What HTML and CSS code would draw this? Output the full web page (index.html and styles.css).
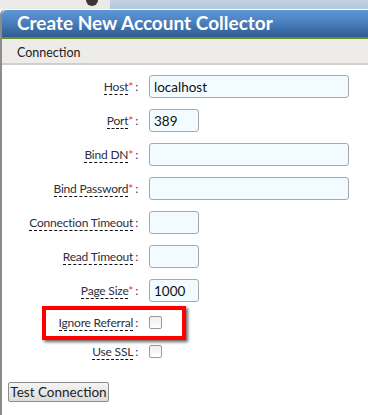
FILE: index.html
```html
<!DOCTYPE html>
<html>
  <head>
    <title>Create New Account Collector</title>
    <link rel="stylesheet" href="styles.css">
  </head>
  <body>
    <div class="desktop">
      <div class="desk-left"><span class="emblem"></span></div>
      <div class="desk-right"></div>
    </div>
    <div class="dialog">
      <div class="titlebar">Create New Account Collector</div>
      <div class="tabbar">Connection</div>
      <div class="form">
        <div class="row">
          <label class="label"><span class="name">Host</span><span class="req">*</span><span class="colon">:</span></label>
          <input class="field wide" type="text" value="localhost">
        </div>
        <div class="row">
          <label class="label"><span class="name">Port</span><span class="req">*</span><span class="colon">:</span></label>
          <input class="field short" type="text" value="389">
        </div>
        <div class="row">
          <label class="label"><span class="name">Bind DN</span><span class="req">*</span><span class="colon">:</span></label>
          <input class="field wide" type="text">
        </div>
        <div class="row">
          <label class="label"><span class="name">Bind Password</span><span class="req">*</span><span class="colon">:</span></label>
          <input class="field wide" type="password">
        </div>
        <div class="row">
          <label class="label"><span class="name">Connection Timeout</span><span class="colon">:</span></label>
          <input class="field short" type="text">
        </div>
        <div class="row">
          <label class="label"><span class="name">Read Timeout</span><span class="colon">:</span></label>
          <input class="field short" type="text">
        </div>
        <div class="row">
          <label class="label"><span class="name">Page Size</span><span class="req">*</span><span class="colon">:</span></label>
          <input class="field short" type="text" value="1000">
        </div>
        <div class="row check-row highlighted">
          <label class="label"><span class="name">Ignore Referral</span><span class="colon">:</span></label>
          <span class="checkbox"></span>
          <span class="highlight"></span>
        </div>
        <div class="row check-row">
          <label class="label"><span class="name">Use SSL</span><span class="colon">:</span></label>
          <span class="checkbox"></span>
        </div>
        <button class="button">Test Connection</button>
      </div>
    </div>
  </body>
</html>
```

FILE: styles.css
```css
body {
  margin: 0;
  font-family: "Segoe UI", Lato, "Open Sans", sans-serif;
  background: #ffffff;
}

.desktop {
  display: flex;
  height: 9px;
}

.desk-left {
  width: 110px;
  background: #ebeae8;
  position: relative;
}

.emblem {
  position: absolute;
  left: 86px;
  top: 0;
  width: 12px;
  height: 6px;
  background: #3a3530;
  border-radius: 0 0 6px 6px;
}

.desk-right {
  flex: 1;
  background: linear-gradient(to bottom, #c3d3e3, #b3c6da);
}

.dialog {
  border-left: 2px solid #8c8c8c;
  border-top-left-radius: 6px;
  min-height: 406px;
  box-sizing: border-box;
}

.titlebar {
  height: 27px;
  border-top: 1px solid #ffffff;
  border-top-left-radius: 5px;
  background: linear-gradient(to bottom, #5e97d6, #4a80bf 45%, #2c5b90);
  border-bottom: 2px solid #6c8f2c;
  color: #ffffff;
  font-weight: bold;
  font-size: 19px;
  line-height: 26px;
  padding-left: 15px;
}

.tabbar {
  height: 24px;
  background: #eeece8;
  border-bottom: 2px solid #cfcfcf;
  font-size: 12.5px;
  line-height: 28px;
  padding-left: 15px;
  color: #222;
}

.form {
  padding-top: 10px;
}

.row {
  display: flex;
  align-items: center;
  height: 23px;
  margin-bottom: 11px;
}

.label {
  width: 136px;
  text-align: right;
  font-size: 12px;
  letter-spacing: -0.2px;
  color: #2e2e3e;
  margin-right: 11px;
  white-space: nowrap;
}

.name {
  border-bottom: 1px dashed #111;
}

.req {
  color: #ee3344;
}

.colon {
  color: #30307a;
  margin-left: 2px;
}

.field {
  height: 23px;
  box-sizing: border-box;
  border: 1px solid #a8a8a8;
  border-radius: 3px;
  background: #f2fbff;
  font-family: "Segoe UI", Lato, "Open Sans", sans-serif;
  font-size: 13.5px;
  color: #111;
  padding: 0 4px;
  outline: none;
}

.wide {
  width: 200px;
}

.short {
  width: 50px;
}

.check-row {
  height: 21px;
  margin-bottom: 8px;
}

.highlighted {
  position: relative;
  margin-top: -1px;
}

.checkbox {
  width: 11px;
  height: 11px;
  border: 1px solid #9a9a9a;
  border-radius: 2px;
  background: linear-gradient(to bottom, #eeeeee, #ffffff);
}

.highlight {
  position: absolute;
  left: 40px;
  top: -6px;
  width: 144px;
  height: 34px;
  box-sizing: border-box;
  border: 4px solid #ff0000;
  box-shadow: 2px 2px 3px rgba(0, 0, 0, 0.6);
}

.button {
  margin: 12px 0 0 6px;
  width: 101px;
  height: 20px;
  padding: 0;
  border: 1px solid #8c8c8c;
  border-radius: 2px;
  background: linear-gradient(to bottom, #f4f4f4, #dcdcdc);
  font-family: "Segoe UI", Lato, "Open Sans", sans-serif;
  font-size: 13.5px;
  white-space: nowrap;
  color: #222;
}
```
